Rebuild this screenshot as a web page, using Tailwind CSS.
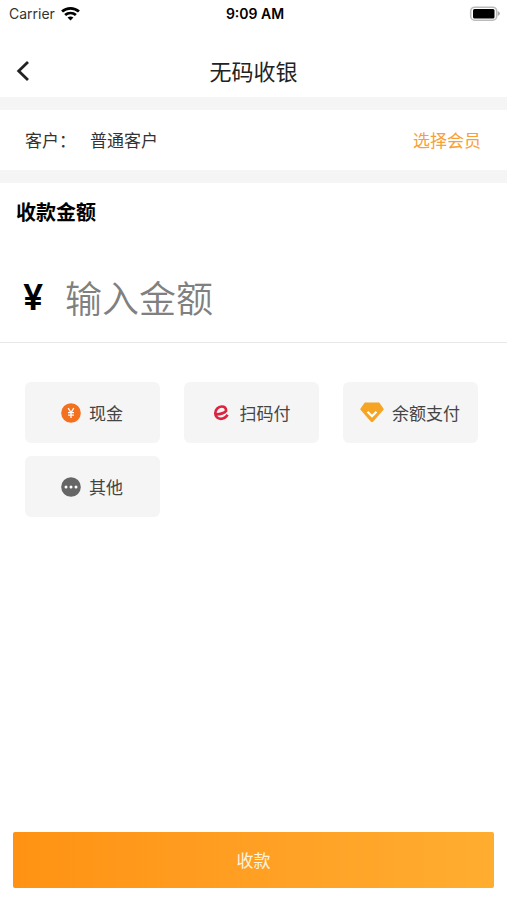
<!DOCTYPE html>
<html lang="zh-CN">
<head>
<meta charset="utf-8">
<meta name="viewport" content="width=device-width, initial-scale=1">
<title>无码收银</title>
<script src="https://cdn.jsdelivr.net/npm/@tailwindcss/browser@4"></script>
</head>
<body class="bg-white font-['Noto_Sans_CJK_SC',sans-serif] text-[#222]">
<div class="flex min-h-screen flex-col">
  <div class="grid h-7 grid-cols-3 items-center pr-[6px] pl-[9px] font-['Inter',sans-serif] text-sm text-[#333]">
    <div class="flex items-center gap-[6px]"><span>Carrier</span>
      <svg class="h-[14px] w-[19px]" viewBox="0 0 18 14" preserveAspectRatio="none" fill="none" stroke="#000" stroke-width="2.6" aria-hidden="true">
        <path d="M1 4.500C5.500 .3 12.500 .3 17 4.500M3.900 8C6.800 5.300 11.200 5.300 14.100 8"/>
        <path d="M9 13.400 6.200 10.500Q9 8.300 11.800 10.500Z" fill="#000" stroke="none"/>
      </svg>
    </div>
    <span class="text-center font-semibold text-black">9:09 AM</span>
    <svg class="h-4 w-[32px] justify-self-end" viewBox="0 0 32 16" aria-hidden="true">
      <rect x="1.700" y="1.200" width="26" height="13" rx="4" fill="#fff" stroke="#bbb" stroke-width="1.600"/>
      <rect x="4" y="3" width="21.500" height="9.500" rx="1.500" fill="#000"/>
      <path d="M28.800 5Q33 7.500 28.800 10Z" fill="#aaa"/>
    </svg>
  </div>

  <header class="grid h-[69px] grid-cols-[48px_1fr_48px] items-center pt-[25px] pb-[10px]">
    <button type="button" aria-label="返回" class="flex h-8 items-center pl-[16px]">
      <svg class="h-[22px] w-[14px]" viewBox="0 0 14 22" fill="none" stroke="#222" stroke-width="2.800" aria-hidden="true"><path d="M12 3 2.700 12 12 21"/></svg>
    </button>
    <h1 class="text-center text-[22px] leading-8 text-[#222]">无码收银</h1>
  </header>

  <section class="flex h-[86px] items-center border-y-[13px] border-[#f5f5f5] pr-[26px] pl-[25px] text-[17px] text-[#333]">
    <span class="w-[65px]">客户：</span>
    <span>普通客户</span>
    <a href="#" class="ml-auto text-[#f9a035]">选择会员</a>
  </section>

  <main class="flex flex-1 flex-col">
    <label for="amount" class="px-4 pt-[14px] text-[20px] leading-[30px] font-bold text-black">收款金额</label>
    <div class="flex h-[116px] items-center border-b border-[#e8e8e8] pt-6 pl-[23px]">
      <span class="w-[42px] font-['Inter',sans-serif] text-[36px] font-semibold text-black">¥</span>
      <input id="amount" type="text" inputmode="decimal" placeholder="输入金额" class="min-w-0 flex-1 text-[37px] leading-[56px] font-[350] outline-none placeholder:text-[#808080]">
    </div>

    <div class="grid grid-cols-3 gap-x-6 gap-y-[13px] pt-[39px] pr-[29px] pl-[25px] text-[17px] text-[#444]">
      <button type="button" class="flex h-[61px] items-center justify-center gap-2 rounded-md bg-[#f5f5f5] pr-px">
        <svg class="size-5" viewBox="0 0 20 20" aria-hidden="true"><circle cx="10" cy="10" r="9.800" fill="#f3701f"/><path d="M7.200 5.200 10 9.500 12.800 5.200M10 9.500V15M7 9.700H13M7 12.200H13" fill="none" stroke="#fff" stroke-width="1.300"/></svg>
        <span>现金</span>
      </button>
      <button type="button" class="flex h-[61px] items-center justify-center gap-2 rounded-md bg-[#f5f5f5] pr-px">
        <svg class="size-5" viewBox="0 0 20 20" fill="none" stroke="#dc2440" stroke-linejoin="round" aria-hidden="true"><path d="M4.200 11.300C8 11.300 13 10 14.100 7.800C14.300 5 12.300 3.400 9.600 3.500C6 3.700 3.300 6.800 3.300 10.300C3.300 13.800 5.800 15.800 8.900 15.800C11.700 15.800 13.900 14.300 15.600 11.800" stroke-width="2.700"/></svg>
        <span>扫码付</span>
      </button>
      <button type="button" class="flex h-[61px] items-center justify-center gap-2 rounded-md bg-[#f5f5f5] pr-px">
        <svg class="h-[21px] w-6" viewBox="0 0 24 21" aria-hidden="true"><path d="M4.800 .5H19.200L23.600 6.700Q23.900 7.300 23.500 7.800L13 19.800Q12 20.600 11 19.800L.5 7.800Q.1 7.300 .4 6.700Z" fill="#f5a523"/><path d="M7.500 9.800 12 14.300 16.500 9.800" fill="none" stroke="#fff" stroke-width="2.200"/></svg>
        <span>余额支付</span>
      </button>
      <button type="button" class="flex h-[61px] items-center justify-center gap-2 rounded-md bg-[#f5f5f5] pr-px">
        <svg class="size-5" viewBox="0 0 20 20" aria-hidden="true"><circle cx="10" cy="10" r="9.800" fill="#666"/><g fill="#fff"><circle cx="5" cy="10" r="1.500"/><circle cx="10" cy="10" r="1.500"/><circle cx="15" cy="10" r="1.500"/></g></svg>
        <span>其他</span>
      </button>
    </div>

    <div class="mt-auto px-[13px] pt-6 pb-3">
      <button type="button" class="h-14 w-full rounded-xs bg-linear-to-r from-[#ff9212] to-[#ffad30] text-[17px] text-[#fff4de]">收款</button>
    </div>
  </main>
</div>
</body>
</html>
